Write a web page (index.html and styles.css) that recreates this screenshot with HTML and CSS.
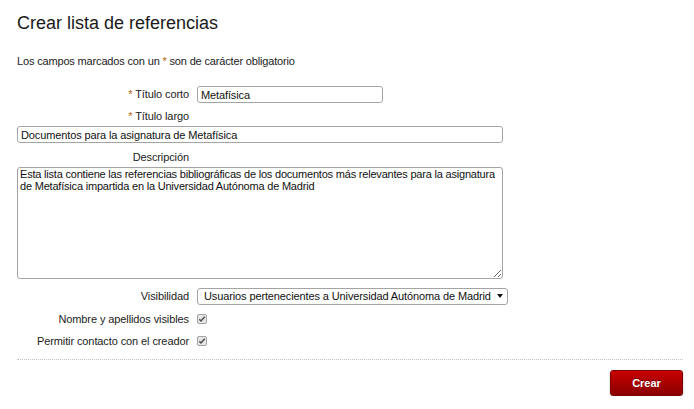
FILE: index.html
```html
<!DOCTYPE html>
<html lang="es">
<head>
<meta charset="utf-8">
<title>Crear lista de referencias</title>
<link rel="stylesheet" href="styles.css">
</head>
<body>
<div class="page">
  <h1 class="title">Crear lista de referencias</h1>
  <p class="note">Los campos marcados con un <span class="req">*</span> son de carácter obligatorio</p>
  <form class="form">
    <div class="row">
      <label class="lbl"><span class="req">*</span> Título corto</label>
      <input class="field short" type="text" value="Metafísica">
    </div>
    <div class="lbl stack"><span class="req">*</span> Título largo</div>
    <input class="field wide" type="text" value="Documentos para la asignatura de Metafísica">
    <div class="lbl stack desc">Descripción</div>
    <textarea class="area">Esta lista contiene las referencias bibliográficas de los documentos más relevantes para la asignatura de Metafísica impartida en la Universidad Autónoma de Madrid</textarea>
    <div class="row vis">
      <label class="lbl">Visibilidad</label>
      <span class="selwrap">
        <select class="sel"><option>Usuarios pertenecientes a Universidad Autónoma de Madrid</option></select>
        <svg class="arrow" width="6" height="4" viewBox="0 0 6 4"><path d="M0 0H6L3 4Z" fill="#111"/></svg>
      </span>
    </div>
    <div class="row chk first">
      <label class="lbl">Nombre y apellidos visibles</label>
      <svg class="cb" width="10" height="10" viewBox="0 0 10 10"><rect x="0.5" y="0.5" width="9" height="9" rx="1.5" fill="#e6e6e6" stroke="#a3a3a3"/><path d="M2.3 5.2L4 7L7.7 2.7" fill="none" stroke="#4a4a4a" stroke-width="1.4"/></svg>
    </div>
    <div class="row chk">
      <label class="lbl">Permitir contacto con el creador</label>
      <svg class="cb" width="10" height="10" viewBox="0 0 10 10"><rect x="0.5" y="0.5" width="9" height="9" rx="1.5" fill="#e6e6e6" stroke="#a3a3a3"/><path d="M2.3 5.2L4 7L7.7 2.7" fill="none" stroke="#4a4a4a" stroke-width="1.4"/></svg>
    </div>
    <div class="actions">
      <button class="btn" type="button">Crear</button>
    </div>
  </form>
</div>
</body>
</html>
```
FILE: styles.css
```css
* { box-sizing: border-box; }
body {
  margin: 0;
  background: #fff;
  color: #222;
  font-family: "Liberation Sans", Arial, sans-serif;
}
.page {
  padding: 12px 11px 0 17px;
}
.title {
  margin: 0;
  font-size: 18px;
  line-height: 22px;
  font-weight: normal;
  color: #1a1a1a;
}
.note {
  margin: 21px 0 0;
  font-size: 11px;
  line-height: 13px;
  letter-spacing: -0.16px;
}
.req { color: #b5600e; }
.form {
  margin-top: 18px;
  font-size: 11px;
  letter-spacing: -0.1px;
}
.row {
  display: flex;
  align-items: center;
  gap: 8px;
  height: 17px;
}
.lbl {
  flex: none;
  width: 172px;
  text-align: right;
  line-height: 17px;
  color: #222;
}
.stack {
  display: block;
  line-height: 13px;
  margin: 7px 0 3px;
}
.stack.desc { margin-top: 8px; }
.field, .area, .sel {
  font-family: "Liberation Sans", Arial, sans-serif;
  font-size: 11px;
  letter-spacing: -0.12px;
  color: #111;
  border: 1px solid #a4a4a4;
  border-radius: 3px;
  background: #fff;
  margin: 0;
  outline: none;
}
.field {
  display: block;
  height: 17px;
  padding: 0 3px;
}
.short { width: 186px; }
.wide { width: 486px; }
.area {
  display: block;
  width: 486px;
  height: 112px;
  padding: 0 1px 0 2px;
  line-height: 12px;
  letter-spacing: -0.2px;
  resize: both;
  overflow: hidden;
}
.vis { margin-top: 9px; }
.selwrap {
  position: relative;
  display: block;
  width: 311px;
  height: 17px;
}
.sel {
  appearance: none;
  -webkit-appearance: none;
  width: 311px;
  height: 17px;
  padding: 0 0 0 6px;
  line-height: 15px;
}
.arrow {
  position: absolute;
  right: 5px;
  top: 6px;
}
.chk.first { margin-top: 6px; }
.chk { margin-top: 5px; }
.cb { flex: none; display: block; margin-top: -1px; }
.actions {
  margin-top: 9px;
  border-top: 1px dotted #c4c4c4;
  padding-top: 10px;
  display: flex;
  justify-content: flex-end;
}
.btn {
  width: 73px;
  height: 26px;
  border: 1px solid #7d0000;
  border-radius: 3px;
  background: linear-gradient(#c80000, #8a0000);
  box-shadow: 0 1px 2px rgba(0, 0, 0, 0.3);
  color: #fff;
  font-family: "Liberation Sans", Arial, sans-serif;
  font-size: 11px;
  font-weight: bold;
  text-shadow: 0 -1px 0 rgba(0, 0, 0, 0.35);
  padding: 0;
}
```
